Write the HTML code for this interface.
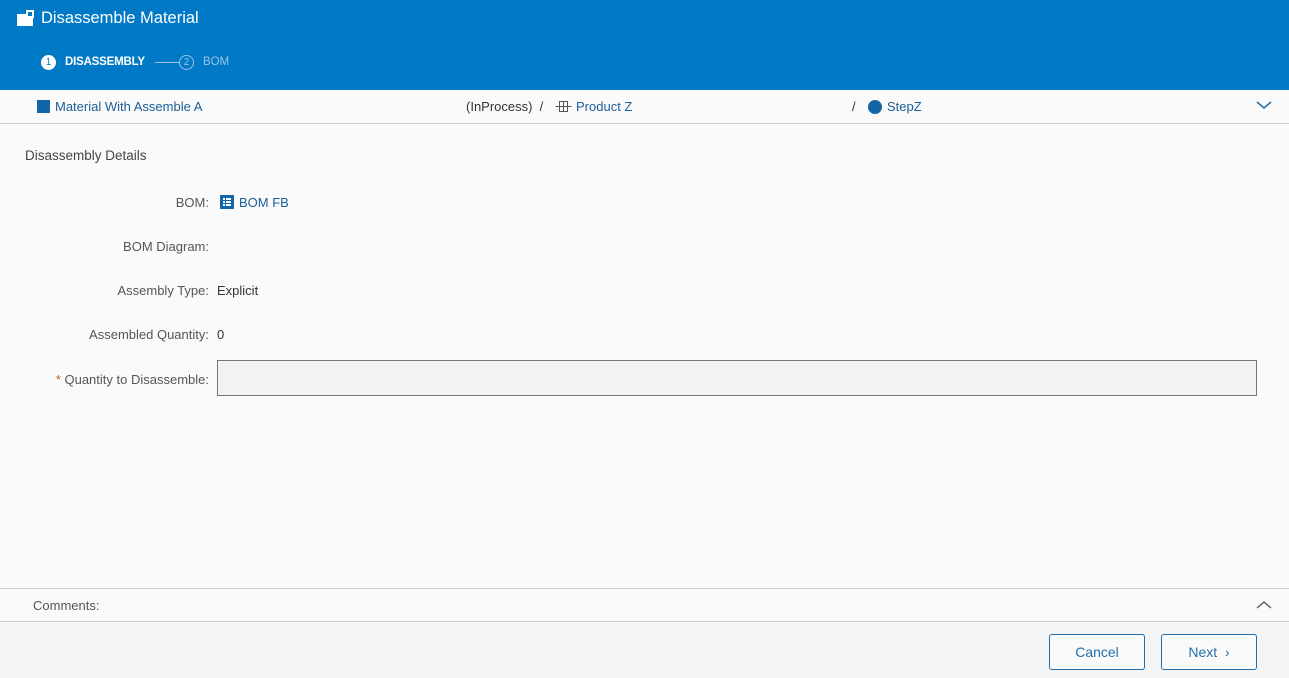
<!DOCTYPE html>
<html><head><style>
*{box-sizing:border-box;margin:0;padding:0}
body{width:1289px;height:678px;background:#fafafa;font-family:"Liberation Sans",sans-serif;font-size:13px;color:#333;position:relative;overflow:hidden}
.hdr{position:absolute;left:0;top:0;width:1289px;height:90px;background:#0079c7;color:#fff}
.abs{position:absolute;white-space:nowrap}
.lbl{position:absolute;right:1080px;color:#555;text-align:right;white-space:nowrap}
.link{color:#1a5f99}
.btn{position:absolute;top:634px;height:36px;border:1px solid #1f6fad;border-radius:3px;color:#1f6fad;font-size:14px;text-align:center;line-height:34px;background:#fafafa}
</style></head><body>
<div class="hdr">
 <svg class="abs" style="left:17px;top:10px" width="17" height="16"><rect x="0" y="4" width="11" height="12" fill="#fff"/><rect x="11" y="8" width="5" height="8" fill="#fff"/><rect x="9" y="0" width="8" height="8" fill="#fff"/><rect x="11" y="2" width="4" height="4" fill="#0079c7"/></svg>
 <div class="abs" style="left:41px;top:9px;font-size:16.5px">Disassemble Material</div>
 <div class="abs" style="left:41px;top:55px;width:15px;height:15px;border-radius:50%;background:#fff;color:#0079c7;font-size:10px;text-align:center;line-height:15px">1</div>
 <div class="abs" style="left:65px;top:56px;font-size:11.5px;font-weight:bold;letter-spacing:-0.2px">DISASSEMBLY</div>
 <div class="abs" style="left:155px;top:62px;width:24px;height:1px;background:#9cc4e4"></div>
 <div class="abs" style="left:179px;top:55px;width:15px;height:15px;border-radius:50%;border:1px solid #9cc4e4;color:#9cc4e4;font-size:10px;text-align:center;line-height:13px">2</div>
 <div class="abs" style="left:203px;top:56px;font-size:11.5px;color:#9cc4e4">BOM</div>
</div>
<div class="abs" style="left:0;top:90px;width:1289px;height:34px;background:#fafafa;border-bottom:1px solid #ccc"></div>
<div class="abs" style="left:37px;top:100px;width:13px;height:13px;background:#1265a6"></div>
<div class="abs link" style="left:55px;top:99px">Material With Assemble A</div>
<div class="abs" style="left:466px;top:99px">(InProcess) &nbsp;/</div>
<svg class="abs" style="left:555px;top:101px" width="17" height="11"><g fill="none" stroke="#555" stroke-width="1"><rect x="4.5" y="0.5" width="8" height="10"/><path d="M0.5 5.5h16M8.5 0.5v10"/></g></svg>
<div class="abs link" style="left:576px;top:99px">Product Z</div>
<div class="abs" style="left:852px;top:99px">/</div>
<div class="abs" style="left:868px;top:100px;width:14px;height:14px;border-radius:50%;background:#1265a6"></div>
<div class="abs link" style="left:887px;top:99px">StepZ</div>
<svg class="abs" style="left:1256px;top:101px" width="16" height="10"><path d="M1 1l7 6 7-6" fill="none" stroke="#1f6fad" stroke-width="1.5"/></svg>
<div class="abs" style="left:25px;top:148px;font-size:13.5px;color:#444">Disassembly Details</div>
<div class="lbl" style="top:195px">BOM:</div>
<svg class="abs" style="left:220px;top:195px" width="14" height="14"><rect width="14" height="14" fill="#1265a6"/><g fill="#fff"><rect x="3" y="3" width="2" height="2"/><rect x="6" y="3" width="5" height="2"/><rect x="3" y="6" width="2" height="2"/><rect x="6" y="6" width="5" height="2"/><rect x="3" y="9" width="2" height="2"/><rect x="6" y="9" width="5" height="2"/></g></svg>
<div class="abs link" style="left:239px;top:195px">BOM FB</div>
<div class="lbl" style="top:239px">BOM Diagram:</div>
<div class="lbl" style="top:283px">Assembly Type:</div>
<div class="abs" style="left:217px;top:283px">Explicit</div>
<div class="lbl" style="top:327px">Assembled Quantity:</div>
<div class="abs" style="left:217px;top:327px">0</div>
<div class="lbl" style="top:372px"><span style="color:#c0661a">*</span> Quantity to Disassemble:</div>
<div class="abs" style="left:217px;top:360px;width:1040px;height:36px;background:#f2f2f2;border:1px solid #777"></div>
<div class="abs" style="left:0;top:588px;width:1289px;height:34px;border-top:1px solid #ccc;border-bottom:1px solid #ccc;background:#fafafa"></div>
<div class="abs" style="left:33px;top:598px;color:#555">Comments:</div>
<svg class="abs" style="left:1256px;top:600px" width="16" height="10"><path d="M1 8l7-6 7 6" fill="none" stroke="#555" stroke-width="1.3"/></svg>
<div class="abs" style="left:0;top:623px;width:1289px;height:55px;background:#f4f4f4"></div>
<div class="btn" style="left:1049px;width:96px">Cancel</div>
<div class="btn" style="left:1161px;width:96px">Next &nbsp;›</div>
</body></html>
